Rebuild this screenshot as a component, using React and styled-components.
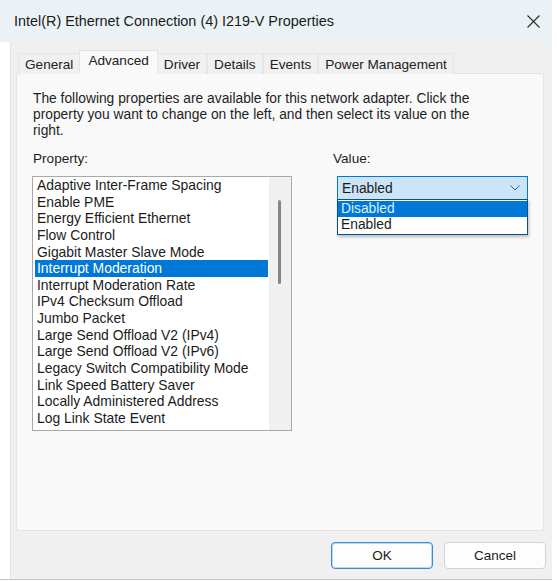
import React from 'react';
import styled, { createGlobalStyle } from 'styled-components';

const GlobalStyle = createGlobalStyle`
  body {
    margin: 0;
    background: #ffffff;
    font-family: "Liberation Sans", Arial, sans-serif;
    color: #1b1b1b;
  }
`;

const Window = styled.div`
  width: 552px;
  height: 580px;
  display: flex;
  flex-direction: column;
  border-bottom: 1px solid #c4c4c4;
  box-sizing: border-box;
`;

const TitleBar = styled.div`
  height: 42px;
  flex: none;
  display: flex;
  align-items: center;
  justify-content: space-between;
  padding: 0 11px 0 14px;
  background: #eaf2f5;
  font-size: 14.4px;
  color: #1a1a1a;
`;

const CloseButton = styled.div`
  width: 16px;
  height: 16px;
  display: flex;
  align-items: center;
  justify-content: center;
`;

const Body = styled.div`
  flex: 1;
  margin-left: 10px;
  background: #f0f0f0;
  display: flex;
  flex-direction: column;
  padding: 9px 8px 0 5px;
  border-left: 1px solid #e4e4e4;
`;

const TabRow = styled.div`
  display: flex;
  align-items: flex-end;
  height: 23px;
  padding-left: 2px;
  position: relative;
  z-index: 1;
`;

const Tab = styled.div`
  height: ${p => (p.$active ? '24px' : '21px')};
  padding: 0 ${p => (p.$active ? '8px' : '6px')};
  margin: 0 ${p => (p.$active ? '-1px' : '0')};
  display: flex;
  align-items: center;
  box-sizing: border-box;
  font-size: 13.6px;
  color: #222;
  background: ${p => (p.$active ? '#f9f9f9' : '#f0f0f0')};
  border: 1px solid ${p => (p.$active ? '#e2e2e2' : '#e6e6e6')};
  border-bottom: ${p => (p.$active ? '1px solid #f9f9f9' : 'none')};
  padding-bottom: ${p => (p.$active ? '4px' : '0')};
`;

const Panel = styled.div`
  height: 458px;
  box-sizing: border-box;
  background: #f9f9f9;
  border: 1px solid #e4e4e4;
  padding: 17px 16px 0 16px;
  margin-top: -1px;
  display: flex;
  flex-direction: column;
`;

const Description = styled.p`
  margin: 0;
  font-size: 13.8px;
  line-height: 16px;
  white-space: nowrap;
  color: #1e1e1e;
`;

const Columns = styled.div`
  display: flex;
  margin-top: 12px;
  gap: 41px;
`;

const Column = styled.div`
  display: flex;
  flex-direction: column;
  flex: none;
  width: ${p => p.$width}px;
`;

const Label = styled.div`
  font-size: 13.6px;
  line-height: 16px;
  margin-bottom: 9px;
  color: #1e1e1e;
`;

const ListBox = styled.div`
  height: 255px;
  box-sizing: border-box;
  border: 1px solid #a8a8a8;
  background: #ffffff;
  display: flex;
  margin-left: -1px;
`;

const Items = styled.div`
  flex: 1;
  padding: 0 1px 0 2px;
`;

const Item = styled.div`
  height: 16.64px;
  line-height: 16.64px;
  font-size: 13.9px;
  padding-left: 2px;
  white-space: nowrap;
  background: ${p => (p.$selected ? '#0078d7' : 'transparent')};
  color: ${p => (p.$selected ? '#ffffff' : '#1b1b1b')};
`;

const ScrollTrack = styled.div`
  width: 22px;
  background: #f0f0f0;
  display: flex;
  justify-content: center;
  padding-top: 23px;
  box-sizing: border-box;
`;

const ScrollThumb = styled.div`
  width: 3px;
  height: 84px;
  border-radius: 2px;
  background: #858585;
  margin-left: -1px;
`;

const DropWrap = styled.div`
  position: relative;
  margin-left: 4px;
  width: 191px;
`;

const Select = styled.div`
  height: 24px;
  box-sizing: border-box;
  border: 1px solid #0078d7;
  background: #cce4f7;
  display: flex;
  align-items: center;
  justify-content: space-between;
  padding: 0 7px 0 4px;
  font-size: 13.8px;
  color: #1b1b1b;
`;

const Menu = styled.div`
  position: absolute;
  top: 23px;
  left: 0;
  right: 0;
  background: #ffffff;
  border: 1px solid #0a4f8a;
  box-shadow: 1px 2px 3px rgba(0, 0, 0, 0.25);
  padding: 1px 0;
`;

const MenuItem = styled.div`
  height: 16px;
  line-height: 16px;
  font-size: 13.8px;
  padding-left: 3px;
  background: ${p => (p.$selected ? '#0078d7' : '#ffffff')};
  color: ${p => (p.$selected ? '#dbeeff' : '#1b1b1b')};
`;

const ButtonRow = styled.div`
  display: flex;
  justify-content: flex-end;
  gap: 11px;
  padding: 11px 0 0 0;
  margin-right: -2px;
`;

const Button = styled.button`
  width: 102px;
  height: 27px;
  border-radius: 4px;
  background: #fdfdfd;
  border: 1px solid ${p => (p.$primary ? '#3b8ad6' : '#d3d3d3')};
  box-shadow: ${p => (p.$primary ? 'inset 0 0 0 1px #b9d8f3' : 'none')};
  font-family: "Liberation Sans", Arial, sans-serif;
  font-size: 13.5px;
  color: #1b1b1b;
  padding: 0;
`;

const properties = [
  'Adaptive Inter-Frame Spacing',
  'Enable PME',
  'Energy Efficient Ethernet',
  'Flow Control',
  'Gigabit Master Slave Mode',
  'Interrupt Moderation',
  'Interrupt Moderation Rate',
  'IPv4 Checksum Offload',
  'Jumbo Packet',
  'Large Send Offload V2 (IPv4)',
  'Large Send Offload V2 (IPv6)',
  'Legacy Switch Compatibility Mode',
  'Link Speed Battery Saver',
  'Locally Administered Address',
  'Log Link State Event',
];

const tabs = ['General', 'Advanced', 'Driver', 'Details', 'Events', 'Power Management'];

function App() {
  return (
    <>
      <GlobalStyle />
      <Window>

        {/* TITLE BAR */}
        <TitleBar>
          <span>Intel(R) Ethernet Connection (4) I219-V Properties</span>
          <CloseButton>
            <svg width="15" height="15" viewBox="0 0 15 15">
              <path d="M1.5 1.5 L13.5 13.5 M13.5 1.5 L1.5 13.5" stroke="#2a2a2a" strokeWidth="1.1" />
            </svg>
          </CloseButton>
        </TitleBar>

        <Body>
          {/* TABS */}
          <TabRow>
            {tabs.map(t => (
              <Tab key={t} $active={t === 'Advanced'}>{t}</Tab>
            ))}
          </TabRow>

          {/* ADVANCED PAGE */}
          <Panel>
            <Description>
              The following properties are available for this network adapter. Click the<br />
              property you want to change on the left, and then select its value on the<br />
              right.
            </Description>

            <Columns>
              <Column $width={259}>
                <Label>Property:</Label>
                <ListBox>
                  <Items>
                    {properties.map(p => (
                      <Item key={p} $selected={p === 'Interrupt Moderation'}>{p}</Item>
                    ))}
                  </Items>
                  <ScrollTrack>
                    <ScrollThumb />
                  </ScrollTrack>
                </ListBox>
              </Column>

              <Column $width={195}>
                <Label>Value:</Label>
                <DropWrap>
                  <Select>
                    <span>Enabled</span>
                    <svg width="10" height="6" viewBox="0 0 10 6">
                      <path d="M0.5 0.5 L5 5 L9.5 0.5" fill="none" stroke="#5a5a5a" strokeWidth="1" />
                    </svg>
                  </Select>
                  <Menu>
                    <MenuItem $selected>Disabled</MenuItem>
                    <MenuItem>Enabled</MenuItem>
                  </Menu>
                </DropWrap>
              </Column>
            </Columns>
          </Panel>

          {/* DIALOG BUTTONS */}
          <ButtonRow>
            <Button $primary>OK</Button>
            <Button>Cancel</Button>
          </ButtonRow>
        </Body>

      </Window>
    </>
  );
}

export default App;
